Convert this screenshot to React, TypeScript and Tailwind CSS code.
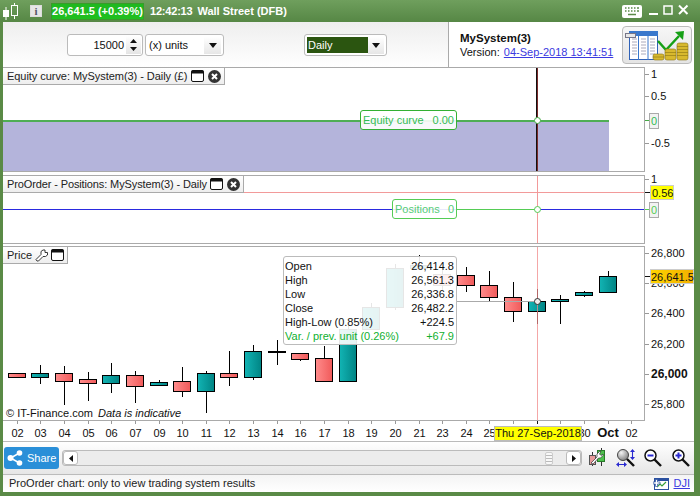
import React from "react";

type C = [number, number, number, number, number, "r" | "t" | "d"];
const candles: C[] = [
  [17, 373, 373, 377, 378, "r"],
  [40, 365, 373, 377, 384, "t"],
  [64, 366, 373, 381, 405, "r"],
  [88, 372, 379, 383, 401, "r"],
  [111, 363, 375, 383, 393, "t"],
  [135, 371, 375, 386, 403, "r"],
  [159, 380, 382, 385, 386, "t"],
  [182, 367, 381, 391, 397, "r"],
  [206, 371, 373, 391, 413, "t"],
  [229, 351, 373, 377, 386, "r"],
  [253, 345, 351, 377, 380, "t"],
  [277, 340, 351, 352, 365, "d"],
  [300, 353, 353, 359, 361, "r"],
  [324, 346, 358, 381, 381, "r"],
  [348, 326, 329, 381, 382, "t"],
  [371, 303, 307, 329, 329, "t"],
  [395, 264, 268, 307, 310, "t"],
  [419, 255, 265, 268, 270, "t"],
  [442, 268, 274, 285, 290, "r"],
  [466, 267, 275, 285, 292, "r"],
  [489, 271, 285, 297, 301, "r"],
  [513, 282, 297, 311, 322, "r"],
  [537, 289, 301, 311, 324, "t"],
  [560, 295, 299, 301, 324, "t"],
  [584, 291, 292, 295, 297, "t"],
  [608, 271, 276, 292, 292, "t"],
];

const xLabels: [number, string][] = [
  [17, "02"], [40, "03"], [64, "04"], [88, "05"], [111, "06"], [135, "07"], [159, "09"], [182, "10"], [206, "11"],
  [229, "12"], [253, "13"], [277, "14"], [300, "16"], [324, "17"], [348, "18"], [371, "19"], [395, "20"], [419, "21"],
  [442, "23"], [466, "24"], [489, "25"], [584, "30"], [631, "02"],
];
const xTicks = [...xLabels.map(([x]) => x), 513, 537, 560, 608];

function WinIcon() {
  return (
    <svg width="13" height="12" viewBox="0 0 13 12" className="shrink-0">
      <rect x="0.5" y="0.5" width="12" height="11" rx="1.5" fill="#fff" stroke="#111" />
      <rect x="0.5" y="0.5" width="12" height="3" fill="#111" />
    </svg>
  );
}
function CloseIcon() {
  return (
    <svg width="13" height="13" viewBox="0 0 13 13" className="shrink-0">
      <circle cx="6.5" cy="6.5" r="6.5" fill="#333" />
      <path d="M4 4l5 5M9 4l-5 5" stroke="#fff" strokeWidth="2" />
    </svg>
  );
}
function Wrench({ className = "" }: { className?: string }) {
  return (
    <svg width="13" height="13" viewBox="0 0 13 13" className={className}>
      <path d="M1 10.5l5-5V2.5L8 1h2v2.5h2.5V6L10.5 7.5H8l-4.5 4.5H2z" fill="#fff" stroke="#222" strokeWidth="0.9" />
    </svg>
  );
}

function PaneTab({ children, className = "" }: { children: React.ReactNode; className?: string }) {
  return (
    <div className={`absolute left-0 top-0 z-10 flex h-[17px] items-center whitespace-nowrap border-r border-b border-[#aaa] bg-gradient-to-b from-white to-[#eeeeee] pl-[4px] text-[11px] leading-none text-[#222] ${className}`}>
      {children}
    </div>
  );
}

function Dot({ cx, cy, stroke, fill = "#fff" }: { cx: number; cy: number; stroke: string; fill?: string }) {
  return <circle cx={cx} cy={cy} r="3" fill={fill} stroke={stroke} strokeWidth="1" />;
}

function Tick({ y, label, bold }: { y: number; label: string; bold?: boolean }) {
  return (
    <>
      <line x1="645" x2="649" y1={y + 0.5} y2={y + 0.5} stroke="#999" />
      <text x="651" y={y + 4} fontSize={bold ? 12 : 11} fontWeight={bold ? 700 : 400} fill="#111">
        {label}
      </text>
    </>
  );
}

function ValueBox({ x, y, w, h, label, fill, color, stroke = "#aaa", tx = 2 }: { x: number; y: number; w: number; h: number; label: string; fill: string; color: string; stroke?: string; tx?: number }) {
  return (
    <>
      <rect x={x + 0.5} y={y + 0.5} width={w} height={h} fill={fill} stroke={stroke} />
      <text x={x + tx} y={y + h / 2 + 4.5} fontSize="11" fill={color}>
        {label}
      </text>
    </>
  );
}

function TitleBar() {
  return (
    <div className="flex h-[22px] shrink-0 items-center bg-gradient-to-b from-[#6f9f5d] to-[#568745] text-white">
      <svg width="18" height="18" viewBox="0 0 18 18" className="ml-[3px]">
        <rect x="0" y="8" width="6" height="7" fill="#fff" />
        <path d="M3 5v13" stroke="#fff" strokeWidth="1" />
        <rect x="8.5" y="3.5" width="6" height="10" fill="none" stroke="#fff" />
        <path d="M11.5 1v2.500M11.500 13.500V17" stroke="#fff" />
      </svg>
      <div className="ml-[9px] flex h-[12px] w-[12px] items-center justify-center border border-[#ddd] bg-[#e6e6e6] font-['Liberation_Serif',serif] text-[11px] font-bold leading-none text-[#556]">
        i
      </div>
      <div className="ml-[9px] flex h-[17px] w-[93px] items-center justify-center whitespace-nowrap border border-[#3a9a2a] bg-gradient-to-b from-[#1fb81f] to-[#1fc01f] text-[11px] font-bold leading-none">
        26,641.5 (+0.39%)
      </div>
      <span className="ml-[6px] whitespace-nowrap text-[11px] font-bold leading-none tracking-[-0.2px]">12:42:13</span>
      <span className="ml-[5px] whitespace-nowrap text-[11px] font-bold leading-none">Wall Street (DFB)</span>
      <div className="ml-auto mr-[7px] flex items-center">
        <svg width="20" height="13" viewBox="0 0 20 13">
          <rect width="20" height="13" rx="2" fill="#fff" />
          <path d="M3 3h1.500M6 3h1.500M9 3h1.500M12 3h1.500M15 3h2M3 6h1.500M6 6h1.500M9 6h1.500M12 6h1.500M15 6h2M6 9.500h8" stroke="#5b8a48" strokeWidth="1.5" />
        </svg>
        <svg width="45" height="14" viewBox="0 0 45 14" className="ml-[6px]">
          <rect x="1" y="9" width="9" height="2" fill="#fff" />
          <rect x="16" y="2" width="8" height="8" fill="none" stroke="#fff" strokeWidth="1.5" />
          <path d="M31 1.500l8.500 8.500M39.500 1.500L31 10" stroke="#fff" strokeWidth="2" />
        </svg>
      </div>
    </div>
  );
}

function SpinArrow() {
  return (
    <svg width="8" height="5" viewBox="0 0 8 5">
      <path d="M0 0h8L4 5z" fill="#111" />
    </svg>
  );
}

function Toolbar() {
  return (
    <div className="flex h-[45px] shrink-0">
      <div className="flex w-[445px] items-center bg-gradient-to-b from-[#eeeeee] to-white pt-[1px]">
        <div className="ml-[64px] flex h-[22px] w-[76px] items-center justify-end rounded-[3px] border border-[#bbb] bg-white pr-[1px] text-[11px] text-[#111]">
          <span className="mr-[2px]">15000</span>
          <span className="flex h-[18px] w-[15px] flex-col items-center justify-center gap-[4px] bg-gradient-to-b from-white to-[#e4e4e4]">
            <svg width="7" height="4" viewBox="0 0 7 4"><path d="M0 4h7L3.500 0z" fill="#111" /></svg>
            <svg width="7" height="4" viewBox="0 0 7 4"><path d="M0 0h7L3.500 4z" fill="#111" /></svg>
          </span>
        </div>
        <div className="ml-[2px] flex h-[22px] w-[79px] items-center justify-between rounded-[3px] border border-[#bbb] bg-white pl-[3px] pr-[2px] text-[11px] text-[#111]">
          <span>(x) units</span>
          <span className="flex h-[17px] w-[17px] items-center justify-center bg-gradient-to-b from-white to-[#e6e6e6]"><SpinArrow /></span>
        </div>
        <div className="ml-[80px] flex h-[22px] w-[83px] items-center rounded-[3px] border border-[#bbb] bg-white pl-[2px] pr-[2px] text-[11px] text-white">
          <span className="flex h-[16px] w-[61px] items-center bg-[#2b5510] pl-[1px]">Daily</span>
          <span className="ml-auto flex h-[17px] w-[16px] items-center justify-center bg-gradient-to-b from-white to-[#e6e6e6]"><SpinArrow /></span>
        </div>
      </div>
      <div className="flex flex-1 items-center border-l border-[#aaa] bg-white">
        <div className="ml-[11px] whitespace-nowrap text-[11px] leading-[14px] text-[#111]">
          <div className="text-[11.5px] font-bold">MySystem(3)</div>
          <div>
            Version: <span className="ml-[1px] text-[#3a3ae0] underline">04-Sep-2018 13:41:51</span>
          </div>
        </div>
        <div className="ml-auto mr-[2px] h-[38px] w-[70px] rounded-[4px] border border-[#bbb] bg-gradient-to-b from-[#f6f6f6] to-[#e4e4e4]">
          <svg width="68" height="36" viewBox="623 26 68 36">
            <rect x="629.500" y="30.500" width="28" height="28" fill="#fff" stroke="#2f62b8" />
            <rect x="629" y="30" width="29" height="5" fill="#3a78cc" />
            <path d="M638.500 30v29M648 30v29" stroke="#3a78cc" />
            <path d="M632 38h5M632 41h5M632 44h5M632 47h5M632 50h5M632 53h5M641 38h5M641 41h5M641 44h5M641 47h5M641 50h5M641 53h5M650 38h5M650 41h5M650 44h5M650 47h5M650 50h5M650 53h5" stroke="#aab" />
            <rect x="625.500" y="32.500" width="10" height="4" fill="#e8e8e8" stroke="#778" />
            <path d="M658 40l8 9 13-14" fill="none" stroke="#16a016" strokeWidth="2.500" />
            <path d="M675 31l9-1-1 9z" fill="#16a016" />
            <rect x="653" y="53" width="11" height="6" rx="2" fill="#d8b92e" stroke="#8a7414" strokeWidth="0.6" />
            <rect x="665" y="48" width="11" height="11" rx="2" fill="#d8b92e" stroke="#8a7414" strokeWidth="0.6" />
            <rect x="677" y="42" width="11" height="17" rx="2" fill="#d8b92e" stroke="#8a7414" strokeWidth="0.6" />
            <path d="M665 51.500h11M665 54.500h11M677 45.500h11M677 48.500h11M677 51.500h11M677 54.500h11M653 56h11" stroke="#8a7414" strokeWidth="0.6" />
          </svg>
        </div>
      </div>
    </div>
  );
}

function EquityPane() {
  return (
    <div className="flex h-[105px] shrink-0">
      <div className="relative w-[642px] border-y border-r border-[#aaa]">
        <svg className="absolute inset-0 h-full w-full" viewBox="3 68 641 103" shapeRendering="crispEdges">
          <rect x="3" y="121" width="606" height="50" fill="#b4b4db" />
          <rect x="3" y="120" width="606" height="2" fill="#4fae55" />
          <rect x="536" y="68" width="2" height="103" fill="#111" />
          <rect x="537" y="68" width="1" height="103" fill="#7a2a2a" />
          <g shapeRendering="auto"><Dot cx={537.5} cy={120.5} stroke="#44aa44" /></g>
        </svg>
        <PaneTab className="w-[222px]">
          <span className="tracking-[-0.05px]">Equity curve: MySystem(3) - Daily (£)</span>
          <span className="ml-auto flex items-center gap-[4px] pr-[3px]"><WinIcon /><CloseIcon /></span>
        </PaneTab>
        <div className="absolute left-[357px] top-[42px] flex h-[20px] w-[97px] items-center justify-between whitespace-nowrap rounded-[3px] border border-[#33b033] bg-white/90 px-[2px] text-[11px] leading-none text-[#33bb55]">
          <span>Equity curve</span><span>0.00</span>
        </div>
      </div>
      <svg className="w-[49px] overflow-visible" viewBox="645 67 49 105">
        <Tick y={74} label="1" />
        <Tick y={96} label="0.5" />
        <line x1="645" x2="649" y1="120.500" y2="120.500" stroke="#44aa44" />
        <ValueBox x={649} y={113} w={9} h={15} label="0" fill="#f2f2f2" color="#33bb55" />
        <Tick y={143} label="-0.5" />
      </svg>
    </div>
  );
}

function PositionsPane() {
  return (
    <div className="mt-[3px] flex h-[69px] shrink-0">
      <div className="relative w-[642px] border-y border-r border-[#aaa]">
        <svg className="absolute inset-0 h-full w-full" viewBox="3 176 641 67" shapeRendering="crispEdges">
          <rect x="3" y="192" width="641" height="1" fill="#f29a9a" />
          <rect x="3" y="209" width="641" height="1" fill="#2a2ae0" />
          <rect x="457" y="209" width="80" height="1" fill="#55cc55" />
          <rect x="537" y="176" width="1" height="67" fill="#f29a9a" />
          <g shapeRendering="auto"><Dot cx={537.5} cy={209.5} stroke="#55cc55" /></g>
        </svg>
        <PaneTab className="w-[241px]">
          <span className="tracking-[-0.12px]">ProOrder - Positions: MySystem(3) - Daily</span>
          <span className="ml-auto flex items-center gap-[4px] pr-[3px]"><WinIcon /><CloseIcon /></span>
        </PaneTab>
        <div className="absolute left-[389px] top-[23px] flex h-[20px] w-[65px] items-center justify-between whitespace-nowrap rounded-[3px] border border-[#55cc55] bg-white/90 px-[2px] text-[11px] leading-none text-[#55cc77]">
          <span>Positions</span><span>0</span>
        </div>
      </div>
      <svg className="w-[49px] overflow-visible" viewBox="645 175 49 69">
        <Tick y={179} label="1" />
        <line x1="645" x2="650" y1="192.500" y2="192.500" stroke="#111" />
        <ValueBox x={650} y={185} w={23} h={14} label="0.56" fill="#ffff00" color="#111" stroke="#ccc" />
        <line x1="645" x2="649" y1="209.500" y2="209.500" stroke="#55cc55" />
        <ValueBox x={649} y={202} w={9} h={15} label="0" fill="#f2f2f2" color="#55cc55" />
      </svg>
    </div>
  );
}

function PricePane() {
  return (
    <div className="mt-[2px] flex h-[175px] shrink-0">
      <div className="relative w-[642px] border-y border-r border-[#aaa]">
        <svg className="absolute inset-0 h-full w-full" viewBox="3 247 641 173" shapeRendering="crispEdges">
          <defs>
            <linearGradient id="red" x1="0" x2="1" y1="0" y2="0">
              <stop offset="0" stopColor="#ff8c8c" />
              <stop offset="1" stopColor="#f05a5a" />
            </linearGradient>
            <linearGradient id="teal" x1="0" x2="1" y1="0" y2="0">
              <stop offset="0" stopColor="#12b4b4" />
              <stop offset="1" stopColor="#008484" />
            </linearGradient>
          </defs>
          {candles.map(([x, wt, bt, bb, wb, k]) => (
            <g key={x}>
              <rect x={x} y={wt} width="1" height={wb - wt} fill="#000" />
              {k === "d" ? (
                <rect x={x - 9} y={bt} width="18" height="2" fill="#000" />
              ) : (
                <rect x={x - 8.5} y={bt + 0.5} width="17" height={bb - bt} fill={k === "r" ? "url(#red)" : "url(#teal)"} stroke="#000" />
              )}
            </g>
          ))}
          <rect x="456" y="301" width="81" height="1" fill="#aaa" />
          <rect x="537" y="247" width="1" height="173" fill="#f08a8a" fillOpacity="0.75" />
          <g shapeRendering="auto"><Dot cx={537.5} cy={301.5} stroke="#333" fill="#eee" /></g>
        </svg>
        <PaneTab className="w-[65px]">
          <span>Price</span>
          <span className="ml-auto flex items-center gap-[3px] pr-[3px]"><Wrench /><WinIcon /></span>
        </PaneTab>
        <div className="absolute left-[280px] top-[9px] flex h-[89px] w-[174px] flex-col whitespace-nowrap rounded-[3px] border border-[#bbb] bg-white/90 pl-[1px] pr-[2px] pt-[2px] text-[11px] leading-[14px] text-[#111]">
          {[["Open", "26,414.8"], ["High", "26,561.3"], ["Low", "26,336.8"], ["Close", "26,482.2"], ["High-Low (0.85%)", "+224.5"]].map(([a, b]) => (
            <div key={a} className="flex justify-between"><span>{a}</span><span>{b}</span></div>
          ))}
          <div className="flex justify-between text-[#10b030]"><span>Var. / prev. unit (0.26%)</span><span>+67.9</span></div>
        </div>
        <div className="absolute bottom-[0px] left-[3px] whitespace-nowrap text-[11px] leading-[14px] text-[#111]">
          © IT-Finance.com <i className="ml-[2px]">Data is indicative</i>
        </div>
      </div>
      <svg className="w-[49px] overflow-visible" viewBox="645 246 49 175">
        <Tick y={253} label="26,800" />
        <Tick y={283} label="26,600" />
        <Tick y={313} label="26,400" />
        <Tick y={344} label="26,200" />
        <Tick y={374} label="26,000" bold />
        <Tick y={404} label="25,800" />
        <line x1="645" x2="650" y1="276.500" y2="276.500" stroke="#111" />
        <defs>
          <linearGradient id="gold" x1="0" x2="1" y1="0" y2="0">
            <stop offset="0" stopColor="#ffd400" />
            <stop offset="1" stopColor="#f2b000" />
          </linearGradient>
        </defs>
        <ValueBox x={650} y={269} w={43} h={14} label="26,641.5" fill="url(#gold)" color="#111" stroke="#ccc" tx={1} />
      </svg>
    </div>
  );
}

function XAxis() {
  return (
    <div className="relative h-[20px] shrink-0">
      <svg className="absolute inset-0 h-full w-full" viewBox="3 421 691 20">
        {xTicks.map((x, i) => (
          <line key={i} x1={x + 0.5} x2={x + 0.5} y1="421" y2="424" stroke={x === 537 ? "#111" : "#999"} />
        ))}
        {xLabels.map(([x, t], i) => (
          <text key={i} x={x + 0.5} y="437" fontSize="11" textAnchor="middle" fill="#111">{t}</text>
        ))}
        <text x="608" y="437" fontSize="13" fontWeight="700" textAnchor="middle" fill="#111">Oct</text>
      </svg>
      <div className="absolute left-[491px] top-[5px] flex h-[15px] w-[88px] items-center justify-center whitespace-nowrap border border-[#bbb] bg-[#ffff00] text-[11px] leading-none text-[#111]">
        Thu 27-Sep-2018
      </div>
    </div>
  );
}

function ScrollArrow({ dir }: { dir: "l" | "r" }) {
  return (
    <span className="flex h-[14px] w-[15px] items-center justify-center rounded-[3px] border border-[#bbb] bg-white">
      <svg width="4" height="7" viewBox="0 0 4 7"><path d={dir === "l" ? "M4 0v7L0 3.500z" : "M0 0v7l4-3.500z"} fill="#111" /></svg>
    </span>
  );
}

function Magnifier({ sign }: { sign: "-" | "+" }) {
  return (
    <svg width="18" height="18" viewBox="0 0 18 18" className="block">
      <circle cx="6.500" cy="6.500" r="5.500" fill="#fff" stroke="#111" strokeWidth="1.500" />
      <path d="M10.500 10.500l6.500 6.500" stroke="#111" strokeWidth="2.400" />
      <path d="M3.500 6.500h6" stroke="#2a2ad0" strokeWidth="2" />
      {sign === "+" && <path d="M6.500 3.500v6" stroke="#2a2ad0" strokeWidth="2" />}
    </svg>
  );
}

function BottomBar() {
  return (
    <div className="flex h-[34px] shrink-0 items-center border-y border-[#bbb] bg-gradient-to-b from-white to-[#e6e6e6] pl-[1px]">
      <div className="flex h-[22px] w-[55px] items-center rounded-[3px] bg-[#2a8fd8] text-[11px] leading-none text-white">
        <svg width="16" height="16" viewBox="0 0 16 16" className="ml-[3px]">
          <path d="M12.500 3L3.500 8l9 5" fill="none" stroke="#fff" strokeWidth="1.500" />
          <circle cx="12.500" cy="3" r="2.800" fill="#fff" />
          <circle cx="3.500" cy="8" r="3" fill="#fff" />
          <circle cx="12.500" cy="13" r="2.800" fill="#fff" />
        </svg>
        <span className="ml-[4px]">Share</span>
      </div>
      <div className="ml-[3px] flex h-[16px] w-[520px] items-center justify-between rounded-[3px] border border-[#bbb] bg-[#ececec]">
        <ScrollArrow dir="l" />
        <span className="ml-auto mr-[13px] h-[13px] w-[8px] rounded-[2px] border border-[#ccc] bg-[repeating-linear-gradient(to_bottom,#f8f8f8_0px,#f8f8f8_2px,#bbb_2px,#bbb_3px)]" />
        <ScrollArrow dir="r" />
      </div>
      <svg width="16" height="20" viewBox="0 0 16 20" className="ml-[7px]">
        <path d="M3.500 4v14M12.500 0v18" stroke="#333" />
        <rect x="0.500" y="7.500" width="6" height="9" fill="#e89a9a" stroke="#555" />
        <rect x="8.500" y="2.500" width="7" height="11" fill="#4cc24c" stroke="#2a7a2a" />
        <path d="M2 15l6-6V6l2.500-2.500H12L10.500 6l1.500 1.500L14 6v1.500L11.500 10H9.500L4 16z" fill="#fff" stroke="#333" strokeWidth="0.700" />
      </svg>
      <svg width="19" height="18" viewBox="0 0 19 18" className="ml-[11px]">
        <defs>
          <radialGradient id="lens" cx="0.350" cy="0.300" r="0.800">
            <stop offset="0" stopColor="#f4f4f4" />
            <stop offset="1" stopColor="#777" />
          </radialGradient>
        </defs>
        <circle cx="7" cy="6" r="5.500" fill="url(#lens)" stroke="#444" />
        <path d="M11 10l7 7" stroke="#111" strokeWidth="2.400" />
        <path d="M1 15.500h9M16.500 1v9" stroke="#2a2ad0" strokeWidth="1.100" />
        <path d="M0 15.500l3-2.500v5zM11 15.500l-3-2.500v5zM16.500 0l-2.500 3h5zM16.500 11l-2.500-3h5z" fill="#2a2ad0" />
      </svg>
      <span className="ml-[9px]"><Magnifier sign="-" /></span>
      <span className="ml-[10px]"><Magnifier sign="+" /></span>
    </div>
  );
}

function StatusBar() {
  return (
    <div className="flex h-[17px] shrink-0 items-center bg-gradient-to-b from-[#f4f4f4] to-white pl-[6px] pr-[2px] text-[11px] leading-none text-[#222]">
      <span>ProOrder chart: only to view trading system results</span>
      <svg width="16" height="12" viewBox="0 0 16 12" className="ml-auto">
        <rect x="1.500" y="0.500" width="14" height="11" fill="#fff" stroke="#2a50a0" />
        <rect x="1" y="0" width="15" height="3" fill="#2a50a0" />
        <path d="M4 9l3-3 2 2 4-4" fill="none" stroke="#3aa03a" strokeWidth="1.200" />
        <path d="M0 4h2.500V1.500h2V4H7v2H4.500v2.500h-2V6H0z" fill="#fff" stroke="#2a50a0" strokeWidth="0.700" />
      </svg>
      <span className="ml-[5px] mr-[2px] text-[#3a3ae0] underline">DJI</span>
    </div>
  );
}

export default function App() {
  return (
    <div className="flex h-[496px] w-[700px] flex-col overflow-hidden bg-[#5a8a46] font-['Liberation_Sans',Arial,sans-serif]">
      <TitleBar />
      <div className="mb-[4px] ml-[3px] mr-[6px] flex flex-1 flex-col bg-white">
        <Toolbar />
        <div className="flex h-[374px] shrink-0 flex-col">
          <EquityPane />
          <PositionsPane />
          <PricePane />
          <XAxis />
        </div>
        <BottomBar />
        <StatusBar />
      </div>
    </div>
  );
}
